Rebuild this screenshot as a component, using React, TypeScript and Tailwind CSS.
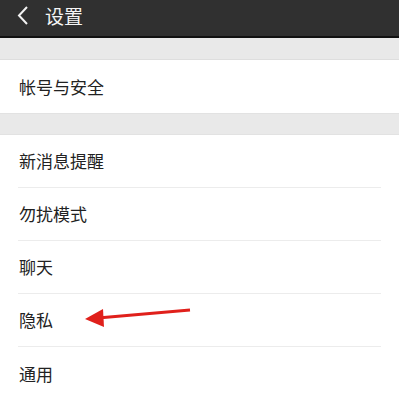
const rows = ['新消息提醒', '勿扰模式', '聊天', '隐私', '通用']

const font = { fontFamily: '"Noto Sans CJK SC", "Noto Sans", sans-serif' }

export default function App() {
  return (
    <div className="h-[398px] w-[399px] overflow-hidden bg-white" style={font}>
      <div className="flex h-[38px] items-center border-b-2 border-[#111] bg-[#303030] pb-[6px] pl-[16px]">
        <svg width="13" height="19" viewBox="0 0 13 19" className="mr-[16px]">
          <path d="M11 1 L3 9.5 L11 18" fill="none" stroke="#f2f2f2" strokeWidth="2" />
        </svg>
        <span className="text-[19px] leading-none text-[#f5f5f5]">设置</span>
      </div>
      <div className="h-[22px] border-b border-[#dedede] bg-[#e9e9e9]" />
      <div className="flex h-[53px] items-center pl-[19px] text-[17px] text-[#222]">帐号与安全</div>
      <div className="h-[22px] border-y border-[#e2e2e2] bg-[#e9e9e9]" />
      <div className="relative">
        {rows.map((r, i) => (
          <div key={r} className="px-[18px]">
            <div
              className={`flex h-[53px] items-center pl-[1px] text-[17px] text-[#222] ${
                i < rows.length - 1 ? 'border-b border-[#ececec]' : ''
              }`}
            >
              {r}
            </div>
          </div>
        ))}
        <svg
          className="absolute left-[82px] top-[168px]"
          width="112"
          height="26"
          viewBox="0 0 112 26"
        >
          <line x1="108" y1="7" x2="16" y2="15" stroke="#e0201b" strokeWidth="3" />
          <path d="M3 16 L21 6 L22 24 Z" fill="#e0201b" />
        </svg>
      </div>
    </div>
  )
}
